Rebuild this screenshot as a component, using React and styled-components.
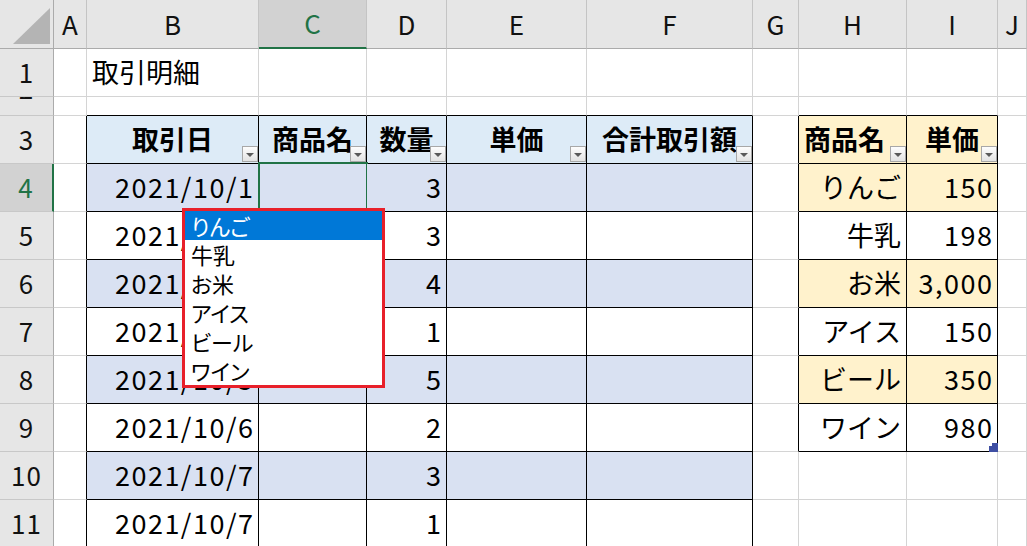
import styled, { createGlobalStyle } from "styled-components";

const GlobalStyle = createGlobalStyle`
  html, body {
    margin: 0;
    padding: 0;
    background: #fff;
  }
  body {
    overflow: hidden;
    font-family: "Noto Sans CJK JP", "Noto Sans", sans-serif;
    color: #000;
  }
`;

const GRID = "#d4d4d4";
const INK = "#000";
const GREEN = "#217346";
const HEAD_BG = "#e6e6e6";
const HEAD_SEL = "#d2d2d2";

const BLUE_HEAD = "#ddebf7";
const BLUE_BAND = "#d9e1f2";
const GOLD = "#fff2cc";

const COLS = ["A", "B", "C", "D", "E", "F", "G", "H", "I", "J"];

const Sheet = styled.div`
  display: grid;
  grid-template-columns: 54px 33px 172px 108px 80px 140px 166px 46px 108px 91px 1fr;
  grid-template-rows: 49px 48px 19px repeat(9, 48px);
  width: 1027px;
  height: 546px;
  overflow: hidden;
`;

const Corner = styled.div`
  box-sizing: border-box;
  background: ${HEAD_BG};
  border-right: 1px solid #ababab;
  border-bottom: 1px solid #ababab;
  svg {
    display: block;
  }
`;

const ColHead = styled.div`
  box-sizing: border-box;
  display: flex;
  align-items: center;
  justify-content: center;
  background: ${(p) => (p.$selected ? HEAD_SEL : HEAD_BG)};
  border-right: 1px solid #c4c4c4;
  border-bottom: ${(p) => (p.$selected ? `2px solid ${GREEN}` : "1px solid #ababab")};
  color: ${(p) => (p.$selected ? GREEN : "#111")};
  font-size: 26px;
  padding-bottom: 2px;
`;

const RowHead = styled.div`
  box-sizing: border-box;
  display: flex;
  align-items: ${(p) => (p.$short ? "flex-start" : "center")};
  justify-content: center;
  overflow: hidden;
  background: ${(p) => (p.$selected ? HEAD_SEL : HEAD_BG)};
  border-right: ${(p) => (p.$selected ? `2px solid ${GREEN}` : "1px solid #ababab")};
  border-bottom: 1px solid #c8c8c8;
  color: ${(p) => (p.$selected ? GREEN : "#111")};
  font-size: 26px;
  letter-spacing: 1px;
  padding-bottom: ${(p) => (p.$short ? "0" : "3px")};
`;

const ClippedNumber = styled.span`
  line-height: 48px;
  margin-top: -33px;
`;

const Cell = styled.div`
  position: relative;
  box-sizing: border-box;
  display: flex;
  align-items: center;
  justify-content: ${(p) =>
    p.$align === "right" ? "flex-end" : p.$align === "center" ? "center" : "flex-start"};
  padding: 0 ${(p) => (p.$numeric ? "3.5px" : "5px")} 3px 5px;
  background: ${(p) => p.$bg || "#fff"};
  border-right: 1px solid ${(p) => p.$edgeRight || GRID};
  border-bottom: 1px solid ${(p) => p.$edgeBottom || GRID};
  font-size: 27px;
  font-weight: ${(p) => (p.$bold ? 700 : 400)};
  letter-spacing: ${(p) => (p.$numeric ? "1.5px" : "0")};
  white-space: nowrap;
`;

const ArrowBox = styled.span`
  position: absolute;
  box-sizing: border-box;
  width: 16px;
  height: 16px;
  border: 1px solid #a8a8a8;
  background: linear-gradient(#fdfdfd, #e3e3e3);
  display: flex;
  align-items: center;
  justify-content: center;
  &::after {
    content: "";
    border-left: 4px solid transparent;
    border-right: 4px solid transparent;
    border-top: 4px solid #5a5a5a;
    margin-top: 1px;
  }
`;

const FilterButton = styled(ArrowBox)`
  right: 0;
  bottom: 1px;
`;

const ListButton = styled(ArrowBox)`
  left: 109px;
  top: 30px;
`;

const SelectionFrame = styled.span`
  position: absolute;
  left: -1px;
  top: -2px;
  width: 110px;
  height: 51px;
  box-sizing: border-box;
  border: 2px solid ${GREEN};
  pointer-events: none;
`;

const PickList = styled.ul`
  position: absolute;
  z-index: 10;
  left: -77px;
  top: 44px;
  width: 203px;
  box-sizing: border-box;
  margin: 0;
  padding: 0;
  list-style: none;
  background: #fff;
  border: 3px solid #e8202a;
  font-weight: 400;
  letter-spacing: 0;
`;

const PickItem = styled.li`
  box-sizing: border-box;
  height: 29px;
  display: flex;
  align-items: center;
  padding: 0 0 2px 6px;
  font-size: 22px;
  font-feature-settings: "palt";
  background: ${(p) => (p.$active ? "#0078d7" : "#fff")};
  color: ${(p) => (p.$active ? "#fff" : "#000")};
`;

const ResizeMark = styled.svg`
  position: absolute;
  right: -1px;
  bottom: -1px;
`;

const dates = [
  "2021/10/1",
  "2021/10/2",
  "2021/10/3",
  "2021/10/4",
  "2021/10/5",
  "2021/10/6",
  "2021/10/7",
  "2021/10/7",
];
const qty = [3, 3, 4, 1, 5, 2, 3, 1];
const products = [
  ["りんご", "150"],
  ["牛乳", "198"],
  ["お米", "3,000"],
  ["アイス", "150"],
  ["ビール", "350"],
  ["ワイン", "980"],
];

const leftCols = ["B", "C", "D", "E", "F"];
const rightCols = ["H", "I"];

function inLeft(col, row) {
  return leftCols.includes(col) && row >= 3 && row <= 11;
}
function inRight(col, row) {
  return rightCols.includes(col) && row >= 3 && row <= 9;
}

function cellBg(col, row) {
  if (inLeft(col, row)) {
    if (row === 3) return BLUE_HEAD;
    return row % 2 === 0 ? BLUE_BAND : "#fff";
  }
  if (inRight(col, row)) {
    if (row === 3) return GOLD;
    return row % 2 === 0 ? GOLD : "#fff";
  }
  return "#fff";
}

function cellEdges(col, row) {
  const i = COLS.indexOf(col);
  const next = COLS[i + 1];
  const inside = inLeft(col, row) || inRight(col, row);
  const rightTouches = next && (inLeft(next, row) || inRight(next, row));
  const belowTouches = inLeft(col, row + 1) || inRight(col, row + 1);
  return {
    right: inside || rightTouches ? INK : GRID,
    bottom: inside || belowTouches ? INK : GRID,
  };
}

function cellContent(col, row) {
  if (row === 1 && col === "B") return { text: "取引明細" };
  if (row === 3) {
    const heads = {
      B: "取引日",
      C: "商品名",
      D: "数量",
      E: "単価",
      F: "合計取引額",
      H: "商品名",
      I: "単価",
    };
    if (heads[col]) {
      return {
        text: heads[col],
        bold: true,
        align: col === "H" ? "left" : "center",
        filter: true,
      };
    }
  }
  if (row >= 4 && row <= 11) {
    if (col === "B") return { text: dates[row - 4], align: "right", numeric: true };
    if (col === "D") return { text: String(qty[row - 4]), align: "right", numeric: true };
  }
  if (row >= 4 && row <= 9) {
    if (col === "H") return { text: products[row - 4][0], align: "right" };
    if (col === "I") return { text: products[row - 4][1], align: "right", numeric: true };
  }
  return null;
}

function ProductPicker() {
  return (
    <>
      <SelectionFrame />
      <ListButton />
      <PickList>
        {products.map(([name], i) => (
          <PickItem key={name} $active={i === 0}>
            {name}
          </PickItem>
        ))}
      </PickList>
    </>
  );
}

function SheetCell({ col, row }) {
  const content = cellContent(col, row);
  const edges = cellEdges(col, row);
  return (
    <Cell
      $bg={cellBg(col, row)}
      $edgeRight={edges.right}
      $edgeBottom={edges.bottom}
      $align={content?.align}
      $bold={content?.bold}
      $numeric={content?.numeric}
    >
      {content?.text}
      {content?.filter && <FilterButton />}
      {col === "C" && row === 4 && <ProductPicker />}
      {col === "I" && row === 9 && (
        <ResizeMark width="9" height="9" viewBox="0 0 9 9">
          <polygon points="3,0 9,0 9,9 0,9 0,3 3,3" fill="#3f4fa3" />
        </ResizeMark>
      )}
    </Cell>
  );
}

export default function App() {
  const rows = Array.from({ length: 11 }, (_, i) => i + 1);
  return (
    <>
      <GlobalStyle />
      <Sheet>
        <Corner>
          <svg width="53" height="48" viewBox="0 0 53 48">
            <polygon points="13,44 50,44 50,8" fill="#b4b4b4" />
          </svg>
        </Corner>
        {COLS.map((c) => (
          <ColHead key={c} $selected={c === "C"}>
            {c}
          </ColHead>
        ))}
        {rows.map((r) => [
          <RowHead key={`h${r}`} $selected={r === 4} $short={r === 2}>
            {r === 2 ? <ClippedNumber>2</ClippedNumber> : r}
          </RowHead>,
          ...COLS.map((c) => <SheetCell key={`${c}${r}`} col={c} row={r} />),
        ])}
      </Sheet>
    </>
  );
}
